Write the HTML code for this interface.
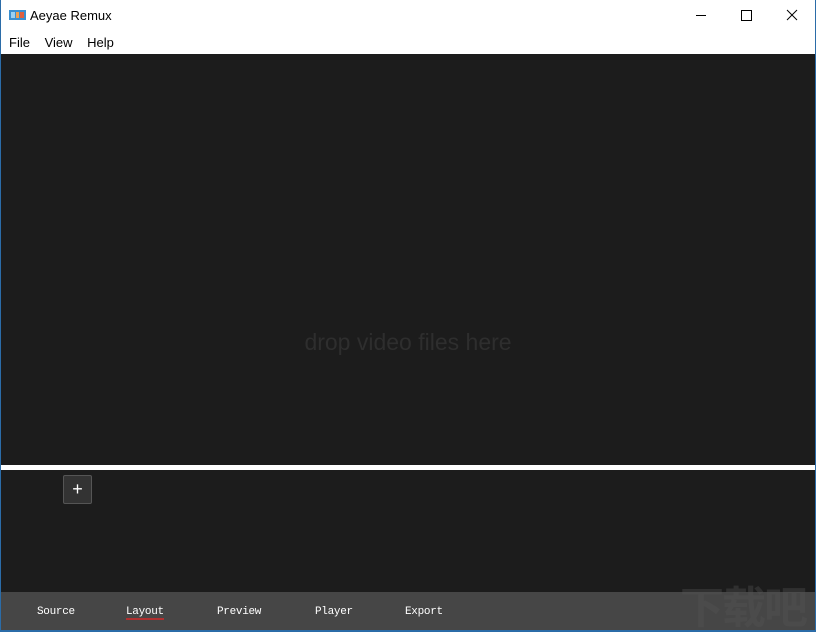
<!DOCTYPE html>
<html><head><meta charset="utf-8"><style>
*{margin:0;padding:0;box-sizing:border-box}
body{width:816px;height:632px;overflow:hidden;background:#fff;font-family:"Segoe UI","Liberation Sans","Noto Sans CJK SC",sans-serif;position:relative}
.title{position:absolute;left:0;top:0;width:816px;height:31px;background:#fff}
.title .t{position:absolute;left:30px;top:8px;font-size:13px;color:#000}
.menu{position:absolute;top:35px;left:9px;font-size:13px;color:#000}
.menu span{margin-right:11px}
.main{position:absolute;left:1px;top:54px;width:814px;height:411px;background:#1c1c1c}
.drop{position:absolute;left:0;right:0;top:275px;text-align:center;color:#2e2e2e;font-size:23px}
.stripe{position:absolute;left:1px;top:465px;width:814px;height:5px;background:#fff}
.low{position:absolute;left:1px;top:470px;width:814px;height:122px;background:#1c1c1c}
.plus{position:absolute;left:63px;top:475px;width:29px;height:29px;background:#333;border:1px solid #555;border-radius:2px;color:#fff;text-align:center;line-height:26px;font-size:18px}
.bar{position:absolute;left:1px;top:592px;width:814px;height:38px;background:#464646}
.bar span{position:absolute;top:14px;color:#fff;font-family:"Liberation Mono",monospace;font-size:11px;letter-spacing:-0.3px}
.bot{position:absolute;left:0;top:630px;width:816px;height:2px;background:#2b6ca8}
.wm{position:absolute;left:680px;top:572px;color:#555;font-size:44px;font-weight:bold;font-family:"Noto Sans CJK SC",sans-serif;opacity:.35;letter-spacing:-2px}
</style></head><body>
<div class="title">
<svg style="position:absolute;left:9px;top:10px" width="17" height="10"><rect width="17" height="10" fill="#3a8fd0"/><rect x="7" y="2" width="3" height="6" fill="#f0a050"/><rect x="11" y="2" width="4" height="6" fill="#e06040"/><rect x="2" y="2" width="4" height="6" fill="#9cd0f0"/></svg>
<div class="t">Aeyae Remux</div>
<svg style="position:absolute;left:690px;top:7px" width="120" height="16" stroke="#000" fill="none" stroke-width="1"><line x1="6" y1="8.5" x2="16" y2="8.5"/><rect x="51.5" y="3.5" width="10" height="10"/><line x1="97" y1="3" x2="107" y2="13"/><line x1="107" y1="3" x2="97" y2="13"/></svg>
</div>
<div class="menu"><span>File</span> <span>View</span> <span>Help</span></div>
<div class="main"><div class="drop">drop video files here</div></div>
<div class="stripe"></div>
<div class="low"></div>
<div class="plus">+</div>
<div class="bar">
<span style="left:36px">Source</span>
<span style="left:125px;border-bottom:2px solid #b03030;line-height:12px">Layout</span>
<span style="left:216px">Preview</span>
<span style="left:314px">Player</span>
<span style="left:404px">Export</span>
</div>
<div class="wm">下载吧</div>
<div class="bot"></div>
<div style="position:absolute;left:0;top:0;width:1px;height:632px;background:#2b6ca8"></div>
<div style="position:absolute;right:0;top:0;width:1px;height:632px;background:#2b6ca8"></div>
</body></html>
